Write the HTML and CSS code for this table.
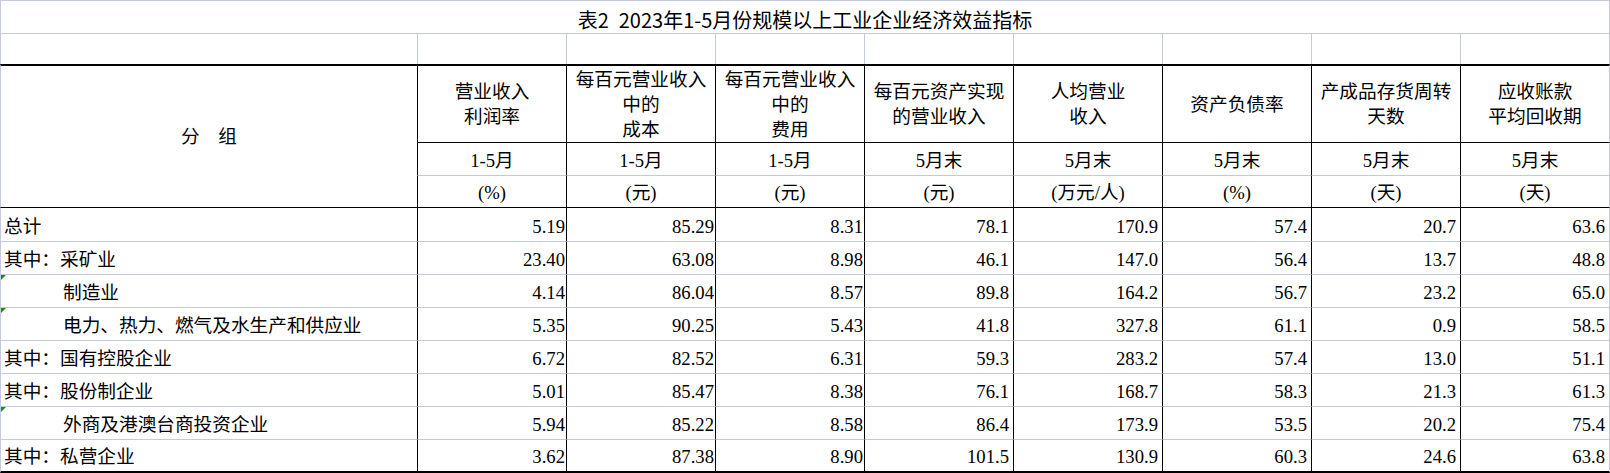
FILE: index.html
```html
<!DOCTYPE html>
<html lang="zh-CN">
<head>
<meta charset="utf-8">
<title>表2 2023年1-5月份规模以上工业企业经济效益指标</title>
<link rel="stylesheet" href="styles.css">
</head>
<body>
<div class="sheet">
  <div class="row title-row"><div class="c title">表2&ensp;2023年1-5月份规模以上工业企业经济效益指标</div></div>
  <div class="row blank-row">
    <div class="c"></div><div class="c"></div><div class="c"></div><div class="c"></div><div class="c"></div><div class="c"></div><div class="c"></div><div class="c"></div><div class="c"></div>
  </div>
  <div class="row hdr-row">
    <div class="c group">分　组</div>
    <div class="c hdr">营业收入<br>利润率</div>
    <div class="c hdr">每百元营业收入<br>中的<br>成本</div>
    <div class="c hdr">每百元营业收入<br>中的<br>费用</div>
    <div class="c hdr">每百元资产实现<br>的营业收入</div>
    <div class="c hdr">人均营业<br>收入</div>
    <div class="c hdr">资产负债率</div>
    <div class="c hdr">产成品存货周转<br>天数</div>
    <div class="c hdr">应收账款<br>平均回收期</div>
  </div>
  <div class="row period-row">
    <div class="c sub">1-5月</div><div class="c sub">1-5月</div><div class="c sub">1-5月</div><div class="c sub">5月末</div><div class="c sub">5月末</div><div class="c sub">5月末</div><div class="c sub">5月末</div><div class="c sub">5月末</div>
  </div>
  <div class="row unit-row">
    <div class="c sub">(%)</div><div class="c sub">(元)</div><div class="c sub">(元)</div><div class="c sub">(元)</div><div class="c sub">(万元/人)</div><div class="c sub">(%)</div><div class="c sub">(天)</div><div class="c sub">(天)</div>
  </div>
  <div class="row data-row first">
    <div class="c lab">总计</div>
    <div class="c num d2">5.19</div><div class="c num d2">85.29</div><div class="c num d2">8.31</div><div class="c num d1">78.1</div><div class="c num d1">170.9</div><div class="c num d1">57.4</div><div class="c num d1">20.7</div><div class="c num d1">63.6</div>
  </div>
  <div class="row data-row">
    <div class="c lab">其中：采矿业</div>
    <div class="c num d2">23.40</div><div class="c num d2">63.08</div><div class="c num d2">8.98</div><div class="c num d1">46.1</div><div class="c num d1">147.0</div><div class="c num d1">56.4</div><div class="c num d1">13.7</div><div class="c num d1">48.8</div>
  </div>
  <div class="row data-row">
    <div class="c lab ind flag">制造业</div>
    <div class="c num d2">4.14</div><div class="c num d2">86.04</div><div class="c num d2">8.57</div><div class="c num d1">89.8</div><div class="c num d1">164.2</div><div class="c num d1">56.7</div><div class="c num d1">23.2</div><div class="c num d1">65.0</div>
  </div>
  <div class="row data-row">
    <div class="c lab ind flag">电力、热力、燃气及水生产和供应业</div>
    <div class="c num d2">5.35</div><div class="c num d2">90.25</div><div class="c num d2">5.43</div><div class="c num d1">41.8</div><div class="c num d1">327.8</div><div class="c num d1">61.1</div><div class="c num d1">0.9</div><div class="c num d1">58.5</div>
  </div>
  <div class="row data-row">
    <div class="c lab">其中：国有控股企业</div>
    <div class="c num d2">6.72</div><div class="c num d2">82.52</div><div class="c num d2">6.31</div><div class="c num d1">59.3</div><div class="c num d1">283.2</div><div class="c num d1">57.4</div><div class="c num d1">13.0</div><div class="c num d1">51.1</div>
  </div>
  <div class="row data-row">
    <div class="c lab">其中：股份制企业</div>
    <div class="c num d2">5.01</div><div class="c num d2">85.47</div><div class="c num d2">8.38</div><div class="c num d1">76.1</div><div class="c num d1">168.7</div><div class="c num d1">58.3</div><div class="c num d1">21.3</div><div class="c num d1">61.3</div>
  </div>
  <div class="row data-row">
    <div class="c lab ind flag">外商及港澳台商投资企业</div>
    <div class="c num d2">5.94</div><div class="c num d2">85.22</div><div class="c num d2">8.58</div><div class="c num d1">86.4</div><div class="c num d1">173.9</div><div class="c num d1">53.5</div><div class="c num d1">20.2</div><div class="c num d1">75.4</div>
  </div>
  <div class="row data-row last">
    <div class="c lab">其中：私营企业</div>
    <div class="c num d2">3.62</div><div class="c num d2">87.38</div><div class="c num d2">8.90</div><div class="c num d1">101.5</div><div class="c num d1">130.9</div><div class="c num d1">60.3</div><div class="c num d1">24.6</div><div class="c num d1">63.8</div>
  </div>
</div>
</body>
</html>
```
FILE: styles.css
```css
html, body {
  margin: 0;
  padding: 0;
  background: #ffffff;
}

.sheet {
  display: grid;
  grid-template-columns: 417px repeat(7, 149px) 150px;
  grid-template-rows: 33px 31px 78px 33px 32px 34px repeat(6, 33px) 34px;
  width: 1610px;
  font-family: "Liberation Serif", "Noto Sans CJK SC", serif;
  font-size: 18.67px;
  color: #000;
}

.row {
  display: contents;
}

.c {
  box-sizing: border-box;
  position: relative;
  display: flex;
  border-left: 1px solid #c4c9db;
  border-top: 1px solid #c4c9db;
  line-height: 20px;
  white-space: nowrap;
}

.row > .c:last-child {
  border-right: 1px solid #c4c9db;
}

/* title */
.title {
  grid-column: 1 / -1;
  justify-content: center;
  align-items: flex-end;
  padding-bottom: 2px;
  font-family: "Noto Sans CJK SC", "Liberation Sans", sans-serif;
  font-size: 20px;
  font-weight: 400;
  line-height: 22px;
}

/* header block */
.hdr-row > .c {
  border-top: 2px solid #000;
}

.hdr-row > .hdr,
.period-row > .c,
.unit-row > .c,
.data-row > .num {
  border-left-color: #000;
}

.period-row > .c {
  border-top-color: #000;
}

.group {
  grid-row: span 3;
  justify-content: center;
  align-items: center;
}

.hdr {
  justify-content: center;
  align-items: center;
  text-align: center;
  line-height: 25px;
}

.sub {
  justify-content: center;
  align-items: flex-end;
  padding-bottom: 4px;
}

/* data */
.data-row.first > .c {
  border-top-color: #000;
}

.data-row.last > .c {
  border-bottom: 2px solid #000;
}

.lab {
  justify-content: flex-start;
  align-items: flex-end;
  padding-left: 3px;
  padding-bottom: 4px;
}

.lab.ind {
  padding-left: 62px;
}

.flag::before {
  content: "";
  position: absolute;
  top: 0;
  left: 0;
  width: 0;
  height: 0;
  border-top: 5px solid #1a8a1a;
  border-right: 5px solid transparent;
}

.num {
  justify-content: flex-end;
  align-items: flex-end;
  padding-bottom: 4px;
}

.num.d2 {
  padding-right: 1px;
}

.num.d1 {
  padding-right: 4px;
}
```
